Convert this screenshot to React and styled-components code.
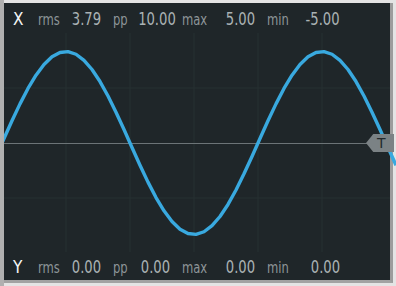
import React from "react";
import styled, { createGlobalStyle } from "styled-components";

const GlobalStyle = createGlobalStyle`
  html, body {
    margin: 0;
    padding: 0;
    background: #ececec;
  }
`;

const Page = styled.div`
  width: 396px;
  height: 286px;
  box-sizing: border-box;
  border-left: 4px solid #b0b0b0;
  background: #e4e4e4;
  display: flex;
  flex-direction: column;
  padding-top: 3px;
  overflow: hidden;
`;

const Screen = styled.div`
  width: 389px;
  height: 280px;
  box-sizing: border-box;
  border-right: 3px solid #9c9c9c;
  border-bottom: 3px solid #a2a2a2;
  background: #1f2629;
  display: flex;
  flex-direction: column;
  font-family: "DejaVu Sans Condensed", "DejaVu Sans", sans-serif;
`;

const StatRow = styled.div`
  height: ${(p) => p.$height}px;
  display: flex;
  align-items: baseline;
  padding-top: ${(p) => p.$top}px;
  padding-left: 9px;
  box-sizing: border-box;
  gap: 12px;
  line-height: 1;
`;

const Channel = styled.span`
  width: 13px;
  color: #f4f6f6;
  font-size: 17px;
`;

const Stat = styled.div`
  width: ${(p) => p.$width}px;
  display: flex;
  align-items: baseline;
  justify-content: space-between;
`;

const Label = styled.span`
  display: inline-block;
  color: #8d9598;
  font-size: 16.5px;
  transform: scaleX(0.78);
  transform-origin: left;
`;

const Value = styled.span`
  display: inline-block;
  color: #aab2b4;
  font-size: 17px;
  transform: scaleX(0.86);
  transform-origin: right;
`;

const Plot = styled.div`
  position: relative;
  height: 219px;
  flex-shrink: 0;
`;

const Trigger = styled.div`
  position: absolute;
  right: -4px;
  top: 101px;
  width: 28px;
  height: 18px;
  background: #7b8285;
  clip-path: polygon(0 50%, 26% 0, 100% 0, 100% 100%, 26% 100%);
  color: #232a2d;
  font-family: "DejaVu Sans", sans-serif;
  font-size: 14px;
  line-height: 18px;
  padding-left: 11px;
  box-sizing: border-box;
`;

const stats = {
  X: [
    ["rms", "3.79", 63],
    ["pp", "10.00", 57],
    ["max", "5.00", 73],
    ["min", "-5.00", 73],
  ],
  Y: [
    ["rms", "0.00", 63],
    ["pp", "0.00", 57],
    ["max", "0.00", 73],
    ["min", "0.00", 73],
  ],
};

const Readout = ({ channel, height, top }) => (
  <StatRow $height={height} $top={top}>
    <Channel>{channel}</Channel>
    {stats[channel].map(([label, value, width]) => (
      <Stat key={label} $width={width}>
        <Label>{label}</Label>
        <Value>{value}</Value>
      </Stat>
    ))}
  </StatRow>
);

// plot starts at page x=4, y=33; centre line at page y=143
const W = 386;
const H = 219;
const MID = 110;

const wavePoints = () => {
  const pts = [];
  for (let x = -8; x <= W + 8; x += 8) {
    const abs = x + 4;
    const y = MID - 91.5 * Math.sin((2 * Math.PI * (abs - 2)) / 256);
    pts.push(`${x},${y.toFixed(2)}`);
  }
  return pts.join(" ");
};

const Scope = () => (
  <Plot>
    <svg width={W} height={H} style={{ display: "block", overflow: "visible" }}>
      {[62, 126, 190, 254, 318].map((x) => (
        <line key={x} x1={x} y1={0} x2={x} y2={H} stroke="#263033" strokeWidth="1" />
      ))}
      {[55, 165].map((y) => (
        <line key={y} x1={0} y1={y} x2={W} y2={y} stroke="#263033" strokeWidth="1" />
      ))}
      <line x1={0} y1={MID + 0.5} x2={W} y2={MID + 0.5} stroke="#6c7477" strokeWidth="1.2" />
      <polyline
        points={wavePoints()}
        fill="none"
        stroke="#39a9df"
        strokeWidth="3.4"
        strokeLinejoin="round"
      />
    </svg>
    <Trigger>T</Trigger>
  </Plot>
);

export default function App() {
  return (
    <Page>
      <GlobalStyle />
      <Screen>
        <Readout channel="X" height={30} top={8} />
        <Scope />
        <Readout channel="Y" height={28} top={7} />
      </Screen>
    </Page>
  );
}
